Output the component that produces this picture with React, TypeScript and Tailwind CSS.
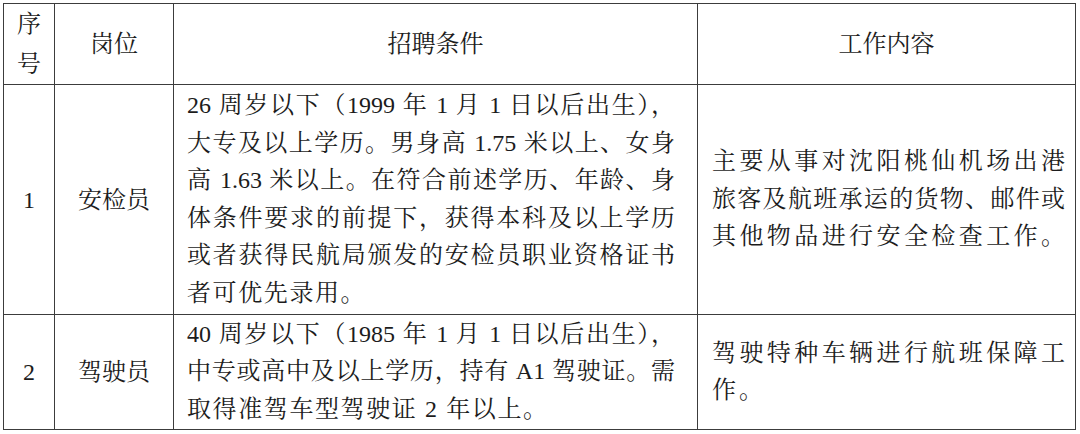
import React from 'react';

type Line = { text: string; full: boolean };

const font = "[font-family:'Liberation_Serif','Noto_Serif_CJK_SC','Noto_Sans_CJK_SC',serif]";

const rows: { no: string; post: string; cond: Line[]; work: Line[] }[] = [
    {
        no: '1',
        post: '安检员',
        cond: [
            { text: '26 周岁以下（1999 年 1 月 1 日以后出生），', full: true },
            { text: '大专及以上学历。男身高 1.75 米以上、女身', full: true },
            { text: '高 1.63 米以上。在符合前述学历、年龄、身', full: true },
            { text: '体条件要求的前提下，获得本科及以上学历', full: true },
            { text: '或者获得民航局颁发的安检员职业资格证书', full: true },
            { text: '者可优先录用。', full: false },
        ],
        work: [
            { text: '主要从事对沈阳桃仙机场出港', full: true },
            { text: '旅客及航班承运的货物、邮件或', full: true },
            { text: '其他物品进行安全检查工作。', full: true },
        ],
    },
    {
        no: '2',
        post: '驾驶员',
        cond: [
            { text: '40 周岁以下（1985 年 1 月 1 日以后出生），', full: true },
            { text: '中专或高中及以上学历，持有 A1 驾驶证。需', full: true },
            { text: '取得准驾车型驾驶证 2 年以上。', full: false },
        ],
        work: [
            { text: '驾驶特种车辆进行航班保障工', full: true },
            { text: '作。', full: false },
        ],
    },
];

const cell = 'border-[1.5px] border-[#3c3c3c] align-middle';

const Lines = ({ lines, lastTracking }: { lines: Line[]; lastTracking: string }) => (
    <div>
        {lines.map((l, i) => (
            <div
                key={i}
                className={
                    l.full
                        ? 'whitespace-nowrap text-justify [text-align-last:justify] leading-[37.5px]'
                        : `whitespace-nowrap text-left leading-[37.5px] ${lastTracking}`
                }
            >
                {l.text}
            </div>
        ))}
    </div>
);

export default function App() {
    return (
        <div lang="zh-CN" className={`bg-white w-[1080px] h-[434px] pt-[3px] pl-[3px] text-[#1c1c1c] text-[24px] ${font}`}>
            <table className="table-fixed border-collapse w-[1072px]">
                <colgroup>
                    <col className="w-[51px]" />
                    <col className="w-[119px]" />
                    <col className="w-[524px]" />
                    <col className="w-[378px]" />
                </colgroup>
                <thead>
                    <tr className="h-[81px]">
                        <th className={`${cell} font-normal text-center leading-[40px]`}>
                            <div>序</div>
                            <div>号</div>
                        </th>
                        <th className={`${cell} font-normal text-center`}>岗位</th>
                        <th className={`${cell} font-normal text-center`}>招聘条件</th>
                        <th className={`${cell} font-normal text-center`}>工作内容</th>
                    </tr>
                </thead>
                <tbody>
                    {rows.map((r, idx) => (
                        <tr key={r.no} className={idx === 0 ? 'h-[230px]' : 'h-[115px]'}>
                            <td className={`${cell} text-center`}>{r.no}</td>
                            <td className={`${cell} text-center`}>{r.post}</td>
                            <td className={`${cell} pl-[13px] pr-[22px] py-0`}>
                                <Lines lines={r.cond} lastTracking="tracking-[1.6px]" />
                            </td>
                            <td className={`${cell} pl-[14px] pr-[10px] py-0`}>
                                <Lines lines={r.work} lastTracking="tracking-[3px]" />
                            </td>
                        </tr>
                    ))}
                </tbody>
            </table>
        </div>
    );
}
